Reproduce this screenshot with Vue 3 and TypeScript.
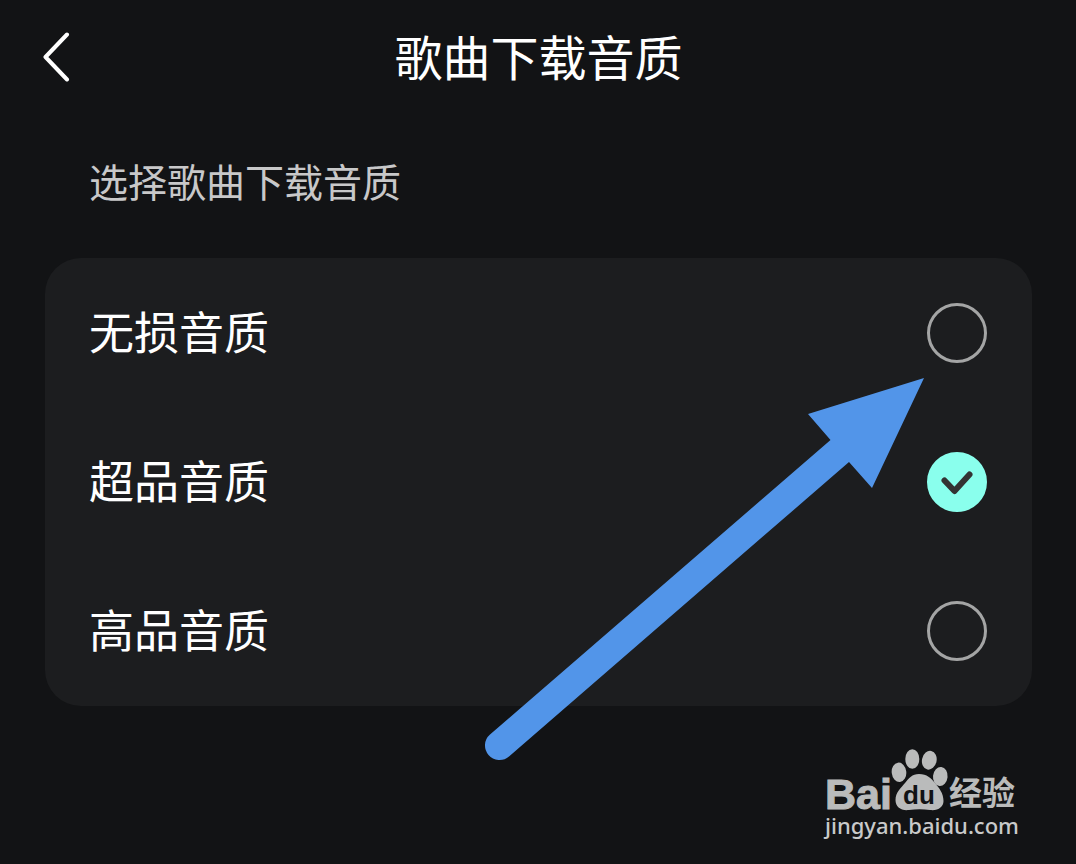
<script setup lang="ts">
import { ref } from 'vue'

interface Quality {
  id: string
  label: string
}

const qualities: Quality[] = [
  { id: 'lossless', label: '无损音质' },
  { id: 'super', label: '超品音质' },
  { id: 'high', label: '高品音质' },
]

const selected = ref<string>('super')
</script>

<template>
  <main class="page">
    <header class="bar">
      <button class="back" type="button" aria-label="返回">
        <svg width="32" height="52" viewBox="0 0 32 52" aria-hidden="true">
          <path d="M27 4.500 5.500 27 27 49.500" />
        </svg>
      </button>
      <h1 class="title">歌曲下载音质</h1>
    </header>

    <h2 id="quality-heading" class="subtitle">选择歌曲下载音质</h2>

    <section class="card" role="radiogroup" aria-labelledby="quality-heading">
      <label v-for="q in qualities" :key="q.id" class="row" :for="q.id">
        <span class="label">{{ q.label }}</span>
        <span class="control">
          <input :id="q.id" v-model="selected" class="radio" type="radio" name="quality" :value="q.id" />
          <svg v-if="selected === q.id" class="tick" width="60" height="60" viewBox="0 0 60 60" aria-hidden="true">
            <path d="M17.500 28.500 27.500 39 42.500 22.500" />
          </svg>
        </span>
      </label>
    </section>

    <footer class="mark">
      <svg width="200" height="100" viewBox="0 0 200 100" role="img" aria-label="Baidu 经验">
        <g class="paw">
          <ellipse cx="79" cy="27.300" rx="7.300" ry="9.700" transform="rotate(-6 79 27.300)" />
          <ellipse cx="92.300" cy="14" rx="7" ry="9.800" />
          <ellipse cx="109.300" cy="15.200" rx="7.300" ry="9.500" transform="rotate(12 109.300 15.200)" />
          <ellipse cx="120.300" cy="31.500" rx="7.300" ry="9.500" transform="rotate(6 120.300 31.500)" />
          <path d="M99 29C107 29 111 33 115 38C119 43 123.500 48 123.500 56C123.500 62 118 66 110 65C103 64 96 64 89 65C81 66 75.500 62 75.500 55C75.500 47 81 43 85 38C89 33 92 29 99 29Z" />
        </g>
        <text class="brand" x="5" y="64">Bai</text>
        <text class="du" x="99" y="59" text-anchor="middle">du</text>
        <text class="jing" x="129" y="60">经验</text>
        <text class="site" x="5" y="89">jingyan.baidu.com</text>
      </svg>
    </footer>

    <svg class="arrow" width="444" height="384" viewBox="481 377 444 384" aria-hidden="true">
      <path d="M924 378 808 414 830.500 440 490 734.500A14.500 14.500 0 0 0 509 756.500L849 462 872 488Z" />
    </svg>
  </main>
</template>

<style>
body {
  margin: 0;
  background: #121315;
}
</style>

<style scoped>
.page {
  position: relative;
  box-sizing: border-box;
  min-height: 100vh;
  padding: 0 44px 0 45px;
  background: #121315;
  color: #fff;
  font-family: "Noto Sans CJK SC", sans-serif;
}

.bar {
  display: grid;
  grid-template-columns: 48px 1fr 48px;
  align-items: center;
  height: 112px;
}

.back {
  display: flex;
  justify-self: start;
  margin-left: -5px;
  padding: 0;
  border: 0;
  background: none;
  cursor: pointer;
}

.back path {
  fill: none;
  stroke: #fff;
  stroke-width: 4;
  stroke-linecap: round;
  stroke-linejoin: round;
}

.title {
  margin: 0;
  padding-bottom: 2px;
  font-size: 48px;
  font-weight: 400;
  line-height: 64px;
  text-align: center;
}

.subtitle {
  margin: 40px 0 50px;
  padding: 0 44px;
  color: #c8c8c9;
  font-size: 39px;
  font-weight: 400;
  line-height: 56px;
}

.card {
  padding-bottom: 1px;
  border-radius: 36px;
  background: #1c1d1f;
}

.row {
  display: flex;
  align-items: center;
  justify-content: space-between;
  height: 149px;
  padding: 0 45px 0 44px;
  cursor: pointer;
}

.label {
  padding-bottom: 4px;
  font-size: 45px;
  line-height: 64px;
}

.control {
  display: grid;
}

.radio,
.tick {
  grid-area: 1 / 1;
}

.radio {
  box-sizing: border-box;
  width: 60px;
  height: 60px;
  margin: 0;
  border: 3px solid #a4a5a5;
  border-radius: 50%;
  appearance: none;
  cursor: pointer;
}

.radio:checked {
  border-color: #8affed;
  background: #8affed;
}

.tick {
  pointer-events: none;
}

.tick path {
  fill: none;
  stroke: #333;
  stroke-width: 6;
  stroke-linecap: round;
  stroke-linejoin: round;
}

.mark {
  display: flex;
  justify-content: flex-end;
  margin-top: 39px;
  margin-right: 12px;
}

.paw {
  fill: #babbbb;
}

.brand {
  fill: #babbbb;
  stroke: #babbbb;
  stroke-width: 1;
  font: bold 43px "Liberation Sans", sans-serif;
}

.du {
  fill: #121315;
  font: bold 26px "Liberation Sans", sans-serif;
}

.jing {
  fill: #babbbb;
  font: bold 33px "Noto Sans CJK SC", sans-serif;
}

.site {
  fill: #c9caca;
  font: 500 22px "Noto Sans", sans-serif;
}

.arrow {
  position: absolute;
  top: 377px;
  right: 151px;
  pointer-events: none;
}

.arrow path {
  fill: #5295e9;
}
</style>
